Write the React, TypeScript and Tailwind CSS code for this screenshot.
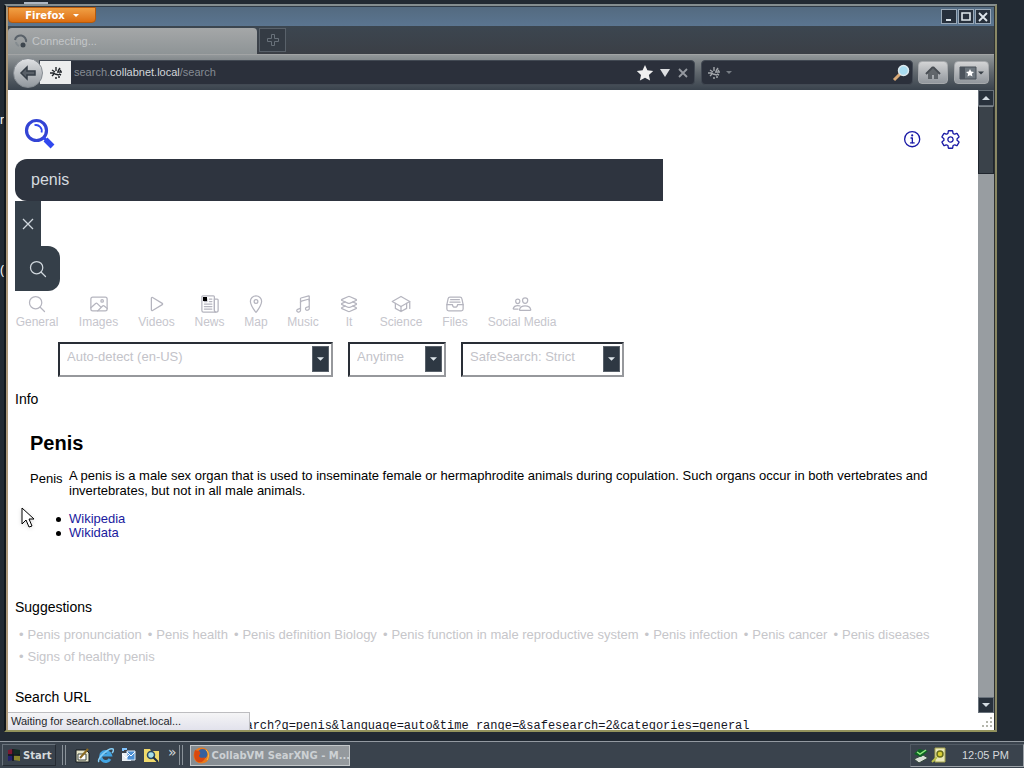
import React from "react";
import {
  IoSearchOutline,
  IoImageOutline,
  IoPlayOutline,
  IoNewspaperOutline,
  IoLocationOutline,
  IoMusicalNotesOutline,
  IoLayersOutline,
  IoSchoolOutline,
  IoFileTrayFullOutline,
  IoPeopleOutline,
  IoSettingsOutline,
  IoInformationCircleOutline,
} from "react-icons/io5";

function NewsIcon({ className }: { className?: string }) {
  return (
    <span className="relative flex">
      <IoNewspaperOutline className={className} />
      <span className="absolute top-[3px] left-[3px] size-1 bg-black" />
    </span>
  );
}

const categories = [
  { label: "General", Icon: IoSearchOutline, width: "w-11" },
  { label: "Images", Icon: IoImageOutline, width: "w-[41px]" },
  { label: "Videos", Icon: IoPlayOutline, width: "w-[37px]" },
  { label: "News", Icon: NewsIcon, width: "w-[31px]" },
  { label: "Map", Icon: IoLocationOutline, width: "w-6" },
  { label: "Music", Icon: IoMusicalNotesOutline, width: "w-8" },
  { label: "It", Icon: IoLayersOutline, width: "w-[22px]" },
  { label: "Science", Icon: IoSchoolOutline, width: "w-11" },
  { label: "Files", Icon: IoFileTrayFullOutline, width: "w-[26px]" },
  { label: "Social Media", Icon: IoPeopleOutline, width: "w-[70px]" },
];

const filters = [
  { name: "Language", value: "Auto-detect (en-US)", width: "w-[275px]" },
  { name: "Time range", value: "Anytime", width: "w-[98px]" },
  { name: "Safe search", value: "SafeSearch: Strict", width: "w-[163px]" },
];

const suggestions = [
  "Penis pronunciation",
  "Penis health",
  "Penis definition Biology",
  "Penis function in male reproductive system",
  "Penis infection",
  "Penis cancer",
  "Penis diseases",
  "Signs of healthy penis",
];

function Triangle({ up = false, className = "" }: { up?: boolean; className?: string }) {
  return (
    <svg viewBox="0 0 8 4" className={className || "h-1 w-2"} fill="currentColor" aria-hidden="true">
      <path d={up ? "M0 4 4 0l4 4z" : "M0 0h8L4 4z"} />
    </svg>
  );
}

function TitleBar() {
  const button =
    "flex h-[15px] w-4 items-center justify-center border border-[#9aa9b8] bg-[#27303c] text-[#dfe6ec]";
  return (
    <header className="flex h-[19px] items-center justify-between bg-linear-to-b from-[#536a80] to-[#5b7590] pr-[3px]">
      <button className="flex h-4 w-[88px] items-center justify-center gap-2 self-start rounded-b-sm border border-[#b65a0c] bg-linear-to-b from-[#f0a043] to-[#dd6d0c] font-['DejaVu_Sans',sans-serif] text-[10px] font-bold text-white">
        Firefox
        <Triangle className="h-[3px] w-1.5" />
      </button>
      <div className="flex gap-px">
        <button aria-label="Minimize" className={button}>
          <svg viewBox="0 0 10 10" className="size-2.5"><path d="M2 8h5" stroke="currentColor" strokeWidth="2" /></svg>
        </button>
        <button aria-label="Maximize" className={button}>
          <svg viewBox="0 0 10 10" className="size-2.5"><path d="M1 1h8v7H1z" fill="none" stroke="currentColor" strokeWidth="1.6" /></svg>
        </button>
        <button aria-label="Close window" className={button}>
          <svg viewBox="0 0 10 10" className="size-2.5"><path d="m1 1 8 8M9 1 1 9" stroke="currentColor" strokeWidth="1.8" /></svg>
        </button>
      </div>
    </header>
  );
}

function Paw({ className }: { className: string }) {
  return (
    <svg viewBox="0 0 12 12" className={className} fill="none" stroke="currentColor" strokeWidth="1.4" aria-hidden="true">
      <path d="M0 6h4M2 3l3 2M6 0v4M10 1 8 4M7 5h5M2 9l3-3M5 7l4 1M9 7l2 1M5 11h2M8 10h2M10 3l1 1" />
    </svg>
  );
}

function TabStrip() {
  return (
    <div className="flex h-7 items-end bg-linear-to-b from-[#3c4650] to-[#3b3f46]">
      <div className="flex h-[26px] w-[249px] items-center gap-1 self-end rounded-t-sm bg-linear-to-b from-[#a5a7a8] to-[#8e9496] pl-[6px] text-[11px] text-[#c3c6c8]">
        <svg viewBox="0 0 14 14" className="size-3.5" fill="none" aria-hidden="true">
          <path d="M1 6a5.500 5.500 0 0 1 11 2" stroke="#596169" strokeWidth="2" />
          <circle cx="9" cy="11" r="2.500" fill="#3d464e" />
          <path d="M2 8a5 5 0 0 0 3 4" stroke="#858c90" strokeWidth="2" />
        </svg>
        Connecting...
      </div>
      <button aria-label="New tab" className="mb-0.5 ml-0.5 flex h-6 w-[27px] items-center justify-center border border-[#59616a] bg-[#343b44] text-[#68717a]">
        <svg viewBox="0 0 14 14" className="size-3.5" fill="none" stroke="currentColor"><path d="M5.500 1.500h3v4h4v3h-4v4h-3v-4h-4v-3h4z" /></svg>
      </button>
    </div>
  );
}

function NavBar() {
  return (
    <nav className="flex h-9 items-center border-t border-[#a2a4a5] bg-linear-to-b from-[#929799] via-[#60676d] to-[#3a434d] pr-[5px] pl-[5px] text-[11px]">
      <button aria-label="Back" className="z-10 flex size-[30px] shrink-0 items-center justify-center rounded-full border border-[#858b91] bg-linear-to-b from-[#e0e2e4] to-[#92989e] text-[#353d46]">
        <svg viewBox="0 0 18 16" className="h-4 w-[18px]" fill="#596068" stroke="currentColor" strokeWidth="1.5"><path d="M8 2 2 8l6 6v-4h8V6H8z" /></svg>
      </button>
      <div className="-ml-1 flex h-[25px] flex-1 items-center rounded-r-sm border border-[#424953] bg-[#2b303b]">
        <span className="flex h-full w-[31px] items-center justify-center bg-[#eceded] text-[#20252a]"><Paw className="size-3" /></span>
        <span className="flex-1 pl-[3px] text-[#858b93]">
          search.<span className="text-[#d3d6da]">collabnet.local</span>/search
        </span>
        <button aria-label="Bookmark" className="text-[#f0f0f0]">
          <svg viewBox="0 0 18 18" className="size-[18px]" fill="currentColor"><path d="m9 1 2.400 5.300 5.800.7-4.300 3.900 1.200 5.700L9 13.700l-5.100 2.900L5 10.900.8 7l5.800-.7z" /></svg>
        </button>
        <button aria-label="History" className="ml-1.5 text-[#dddfe1]">
          <svg viewBox="0 0 10 8" className="h-2 w-2.5" fill="currentColor"><path d="M0 0h10L5 8z" /></svg>
        </button>
        <button aria-label="Stop" className="mr-[6px] ml-2 text-[#9599a0]">
          <svg viewBox="0 0 10 10" className="size-2.5" stroke="currentColor" strokeWidth="1.8"><path d="m1 1 8 8M9 1 1 9" /></svg>
        </button>
      </div>
      <div className="ml-[6px] flex h-[25px] w-[212px] items-center rounded-sm border border-[#424953] bg-[#2b303b] px-1.5">
        <span className="text-[#a3a7ac]"><Paw className="size-3" /></span>
        <Triangle className="ml-[6px] h-[3px] w-1.5 text-[#777d84]" />
        <input aria-label="Web search" className="min-w-0 flex-1 bg-transparent outline-none" />
        <button aria-label="Search the web" className="-mr-1">
          <svg viewBox="0 0 18 18" className="size-[18px]" fill="none">
            <path d="m8 10-6 6" stroke="#d8a977" strokeWidth="3" />
            <circle cx="11.500" cy="6.500" r="5" fill="#a9dcf0" stroke="#dce8ee" strokeWidth="1.500" />
          </svg>
        </button>
      </div>
      <button aria-label="Home" className="ml-[5px] flex h-[23px] w-[30px] items-center justify-center rounded-sm border border-[#a6a9ac] bg-linear-to-b from-[#d3d4d5] to-[#92979d] text-[#474c52]">
        <svg viewBox="0 0 18 16" className="h-4 w-[18px]"><path d="M9 2 2 9M9 2l7 7" stroke="currentColor" strokeWidth="2" /><path d="M4 8 9 3l5 5v6h-4v-4H8v4H4z" fill="currentColor" fillOpacity=".75" /></svg>
      </button>
      <button aria-label="Bookmarks" className="ml-[6px] flex h-[23px] w-[35px] items-center justify-center gap-px rounded-sm border border-[#a6a9ac] bg-linear-to-b from-[#d3d4d5] to-[#92979d] text-[#373e46]">
        <svg viewBox="0 0 18 14" className="h-3.5 w-[18px]"><path d="M1 1h16v12H1z" fill="#6c757d" stroke="#485059" /><path d="M1 1h5v12H1z" fill="#4b535c" /><path d="m11 3 1.200 2.600 2.800.3-2.100 1.900.6 2.800-2.500-1.400-2.500 1.400.6-2.800L7 5.900l2.800-.3z" fill="#fff" /></svg>
        <Triangle className="h-1 w-1.5" />
      </button>
    </nav>
  );
}

function SearchForm() {
  return (
    <form onSubmit={(e) => e.preventDefault()} className="flex flex-col items-start">
      <input
        aria-label="Search for"
        defaultValue="penis"
        className="h-[42px] w-[648px] max-w-full rounded-l-xl bg-[#2e343f] px-4 text-base text-[#d5dadf] outline-none"
      />
      <button type="reset" aria-label="Clear" className="flex h-[45px] w-[26px] items-center justify-center bg-[#353f49] text-[#d0d7dd]">
        <svg viewBox="0 0 12 12" className="size-3" stroke="currentColor" strokeWidth="1.3"><path d="m1 1 10 10M11 1 1 11" /></svg>
      </button>
      <button type="submit" aria-label="Search" className="flex size-[45px] items-center justify-center rounded-r-xl bg-[#353f49] text-[#d0d7dd]">
        <IoSearchOutline className="size-5" />
      </button>
    </form>
  );
}

function Results() {
  return (
    <main className="relative flex min-w-0 flex-1 flex-col overflow-hidden bg-white px-[7px]">
      <div className="flex h-[69px] shrink-0 items-start justify-between pt-7">
        <a href="#home" aria-label="Home page" className="ml-[9px] text-[#3048ef]">
          <svg viewBox="0 0 32 32" className="size-8" fill="none" stroke="currentColor">
            <circle cx="12.500" cy="12.500" r="10" stroke="#3344d4" strokeWidth="3.200" />
            <path d="M10.500 7.200a5.800 5.800 0 0 1 7 7.300" strokeWidth="1.800" />
            <path d="m19.500 19.500 3 3" strokeWidth="3" />
            <path d="m21.500 21.500 7 7" strokeWidth="5.500" />
          </svg>
        </a>
        <div className="mt-[11px] mr-2.5 flex gap-[17px] text-[#1a1aa6]">
          <a href="#about" aria-label="About"><IoInformationCircleOutline className="size-[21px]" /></a>
          <a href="#preferences" aria-label="Preferences"><IoSettingsOutline className="size-[21px]" /></a>
        </div>
      </div>
      <SearchForm />
      <div className="mt-[3px] flex shrink-0 gap-[19px] text-xs text-[#c6c6cd]">
        {categories.map(({ label, Icon, width }) => (
          <button key={label} className={`flex shrink-0 flex-col items-center whitespace-nowrap ${width}`}>
            <Icon className="size-5 text-[#b5b5bf]" />
            <span className="leading-4">{label}</span>
          </button>
        ))}
      </div>
      <div className="mt-3 ml-[43px] flex shrink-0 gap-[15px]">
        {filters.map(({ name, value, width }) => (
          <div key={name} className={`relative ${width}`}>
            <select
              aria-label={name}
              className="h-[35px] w-full appearance-none border-2 border-t-[#292e36] border-r-[#96989c] border-b-[#96989c] border-l-[#292e36] bg-white pr-6 pb-1.5 pl-[7px] text-[13px] text-[#c3c3c9]"
            >
              <option>{value}</option>
            </select>
            <span className="pointer-events-none absolute top-1 right-1 flex h-[26px] w-[17px] items-center justify-center border border-[#59616a] bg-[#2e3843] text-[#dfe6eb]">
              <Triangle className="h-1 w-[7px]" />
            </span>
          </div>
        ))}
      </div>
      <h4 className="mt-3 text-sm leading-5">Info</h4>
      <article className="mt-5 px-[15px] text-[13px]">
        <h2 className="text-xl leading-7 font-bold">Penis</h2>
        <div className="mt-[11px] flex">
          <span className="w-[39px] shrink-0 pt-[3px] leading-[15px]">Penis</span>
          <p className="leading-[15px]">
            A penis is a male sex organ that is used to inseminate female or hermaphrodite animals during copulation. Such organs occur in both vertebrates and invertebrates, but not in all male animals.
          </p>
        </div>
        <ul className="mt-[14px] pl-[26px] leading-[14px]">
          {["Wikipedia", "Wikidata"].map((site) => (
            <li key={site} className="flex items-center gap-2">
              <span className="size-[5px] rounded-full bg-black" />
              <a href={`#${site}`} className="text-[#1a1a9e]">{site}</a>
            </li>
          ))}
        </ul>
      </article>
      <h4 className="mt-[57px] text-sm leading-5">Suggestions</h4>
      <ul className="mt-[7px] flex flex-wrap gap-x-[6px] pl-1 text-[13px] leading-[22px] text-[#c6c6ca]">
        {suggestions.map((s) => (
          <li key={s} className="flex gap-1">
            <span>•</span>
            <button className="whitespace-nowrap">{s}</button>
          </li>
        ))}
      </ul>
      <h4 className="mt-[19px] text-sm leading-5">Search URL</h4>
      <pre className="mt-[11px] font-['Liberation_Mono',monospace] text-xs leading-4 text-[#15151f]">
        http://search.collabnet.local/search?q=penis&amp;language=auto&amp;time_range=&amp;safesearch=2&amp;categories=general
      </pre>
      <div className="absolute bottom-0 left-0 h-[18px] w-[242px] border-t border-r border-[#bdbdc0] bg-linear-to-b from-[#f5f5f6] to-[#e2e2ec] pl-[3px] text-[11px] leading-[17px] text-[#24272b]">
        Waiting for search.collabnet.local...
      </div>
    </main>
  );
}

function ScrollBar() {
  const button = "flex h-4 w-full shrink-0 items-center justify-center border border-[#69727b] bg-[#28313c] text-[#d3dbe2]";
  return (
    <aside className="flex w-4 shrink-0 flex-col bg-white">
      <button aria-label="Scroll up" className={button}><Triangle up /></button>
      <div className="flex-1 bg-[#989da1]">
        <div className="h-[68px] border border-[#1f252d] border-t-[#7d858c] bg-[#3a424a]" />
      </div>
      <button aria-label="Scroll down" className={button}><Triangle /></button>
      <svg viewBox="0 0 16 17" className="h-[17px] w-4" fill="#b4b6ac" aria-hidden="true">
        <path d="M12 4h2v2h-2zM8 8h2v2H8zM12 8h2v2h-2zM4 12h2v2H4zM8 12h2v2H8zM12 12h2v2h-2z" />
      </svg>
    </aside>
  );
}

function Taskbar() {
  const icon = "size-[17px]";
  return (
    <footer className="flex h-[27px] shrink-0 items-center border-t border-[#939aa1] bg-[#3a434d] pl-0.5 font-['DejaVu_Sans',sans-serif] text-[11px] text-[#d5d9dc]">
      <button className="flex h-[22px] w-[54px] items-center gap-0.5 border border-[#69727b] border-r-[#252b33] border-b-[#252b33] pl-1 text-[10px] font-bold">
        <svg viewBox="0 0 14 14" className="size-3.5" aria-hidden="true">
          <path d="M1 2 6 1v5L1 7z" fill="#7b1830" /><path d="m7 1 6 1v5L7 6z" fill="#152b22" />
          <path d="m1 8 5-1v5l-5 1z" fill="#25216d" /><path d="m7 7 6 1v5l-6-1z" fill="#8a842b" />
          <path d="M6 1v12M1 7h12" stroke="#10151b" strokeWidth="1.500" />
        </svg>
        Start
      </button>
      <span className="ml-1.5 h-5 w-1 border-x border-[#8a9299]" />
      <div className="ml-2 flex items-center gap-[6px]">
        <button aria-label="Show desktop">
          <svg viewBox="0 0 17 17" className={icon}><path d="M2 3h10l3 3v9H2z" fill="#e7e5c9" stroke="#151b1e" /><path d="M4 7h8v6H4z" fill="#fff" stroke="#3c463f" /><path d="m6 11 8-9" stroke="#8a6a22" strokeWidth="2" /></svg>
        </button>
        <button aria-label="Internet Explorer">
          <svg viewBox="0 0 17 17" className={icon} fill="none"><path d="M13 12a5 5 0 1 1 .5-4H5" stroke="#43a5e3" strokeWidth="3" /><path d="M2 15C-1 12 12 0 16 2c1 1 0 3-1 4" stroke="#86cef6" strokeWidth="1.500" /></svg>
        </button>
        <button aria-label="Mail">
          <svg viewBox="0 0 17 17" className={icon}><path d="M2 6h9v8H2z" fill="#e9eff3" /><path d="M7 4h8v9H7z" fill="#4b8fd4" stroke="#ddecfa" /><path d="m7 5 4 4 4-4M2 7l4 4 3-3" fill="none" stroke="#fff" /><path d="M3 4V2h4" stroke="#82c4ff" strokeWidth="2" fill="none" /></svg>
        </button>
        <button aria-label="Find files">
          <svg viewBox="0 0 17 17" className={icon}><path d="M1 2h6l1 2h8v11H1z" fill="#efd96b" /><circle cx="8" cy="8" r="3.500" fill="#a5dfe9" stroke="#284764" strokeWidth="1.500" /><path d="m10 10 5 5" stroke="#1d2e42" strokeWidth="2" /></svg>
        </button>
      </div>
      <button aria-label="More shortcuts" className="ml-2 self-start pt-0.5 text-sm leading-4">»</button>
      <span className="ml-0.5 h-5 w-1 border-x border-[#8a9299]" />
      <button className="ml-[7px] flex h-[21px] w-40 items-center gap-0.5 border border-[#c4c8ca] bg-linear-to-r from-[#858c92] to-[#959a9e] pl-0.5 text-[10px] font-bold whitespace-nowrap text-[#cdd1d4]">
        <svg viewBox="0 0 17 17" className="size-[17px] shrink-0" aria-hidden="true">
          <circle cx="8.500" cy="8.500" r="8" fill="#e77a1e" /><circle cx="9.500" cy="7" r="5" fill="#35609f" />
          <path d="M2 3c2 1 4 0 5 2s-1 3-1 4 3 3 6 1c0 4-4 6-7 5s-5-6-3-12" fill="#d9480f" /><path d="M13 3c3 2 3 7 1 10" stroke="#ffc044" fill="none" />
        </svg>
        CollabVM SearXNG - M...
      </button>
      <div className="ml-auto flex h-[23px] w-[114px] items-center border border-t-[#525b65] border-r-[#9da3a9] border-b-[#9da3a9] border-l-[#525b65] pl-0.5">
        <svg viewBox="0 0 17 17" className="size-[17px]" aria-hidden="true"><path d="m1 12 9-4 5 3-9 5z" fill="#d8ded6" stroke="#32463a" /><path d="m1 7 5-5 9 2-7 6z" fill="#0d6422" /><path d="m4 5 3 2 6-4" stroke="#91ea80" strokeWidth="1.500" fill="none" /></svg>
        <svg viewBox="0 0 17 17" className="size-[17px]" aria-hidden="true"><path d="M5 1h10v14H5z" fill="#eae9b9" stroke="#a5a44c" /><circle cx="10" cy="7" r="3" fill="#d9cf35" stroke="#696f19" strokeWidth="1.500" /><path d="m7 10-5 5" stroke="#bac14a" strokeWidth="2" /></svg>
        <time className="ml-auto pr-3.5 font-['Liberation_Sans',sans-serif] text-[11px]">12:05 PM</time>
      </div>
    </footer>
  );
}

export default function App() {
  return (
    <div className="relative flex h-screen flex-col overflow-hidden bg-[#222a33] font-['Liberation_Sans',Arial,sans-serif] text-black">
      <span className="absolute top-[2px] left-6 h-0.5 w-6 bg-[#aeb7c2]" />
      <span className="absolute top-28 left-0 w-1 overflow-hidden text-xs text-white">r</span>
      <span className="absolute top-[262px] left-0 w-1 overflow-hidden text-xs text-white">(</span>
      <section className="mt-1 mr-[27px] mb-[9px] ml-1 flex min-h-0 flex-1 flex-col border-2 border-t-[#858e90] border-r-[#8a8865] border-b-[#93935c] border-l-[#11171c]">
        <div className="flex min-h-0 flex-1 flex-col border-t border-r border-l-2 border-t-[#303c48] border-r-[#2d3131] border-l-[#ab9779]">
          <TitleBar />
          <TabStrip />
          <NavBar />
          <div className="flex min-h-0 flex-1">
            <Results />
            <ScrollBar />
          </div>
        </div>
      </section>
      <Taskbar />
      <svg viewBox="0 0 14 22" className="absolute top-[507px] left-[21px] h-[22px] w-3.5 drop-shadow-sm" fill="#fff" stroke="#000" aria-hidden="true">
        <path d="M1 1v16l4-4 3 7 3-1-3-7h5z" />
      </svg>
    </div>
  );
}
